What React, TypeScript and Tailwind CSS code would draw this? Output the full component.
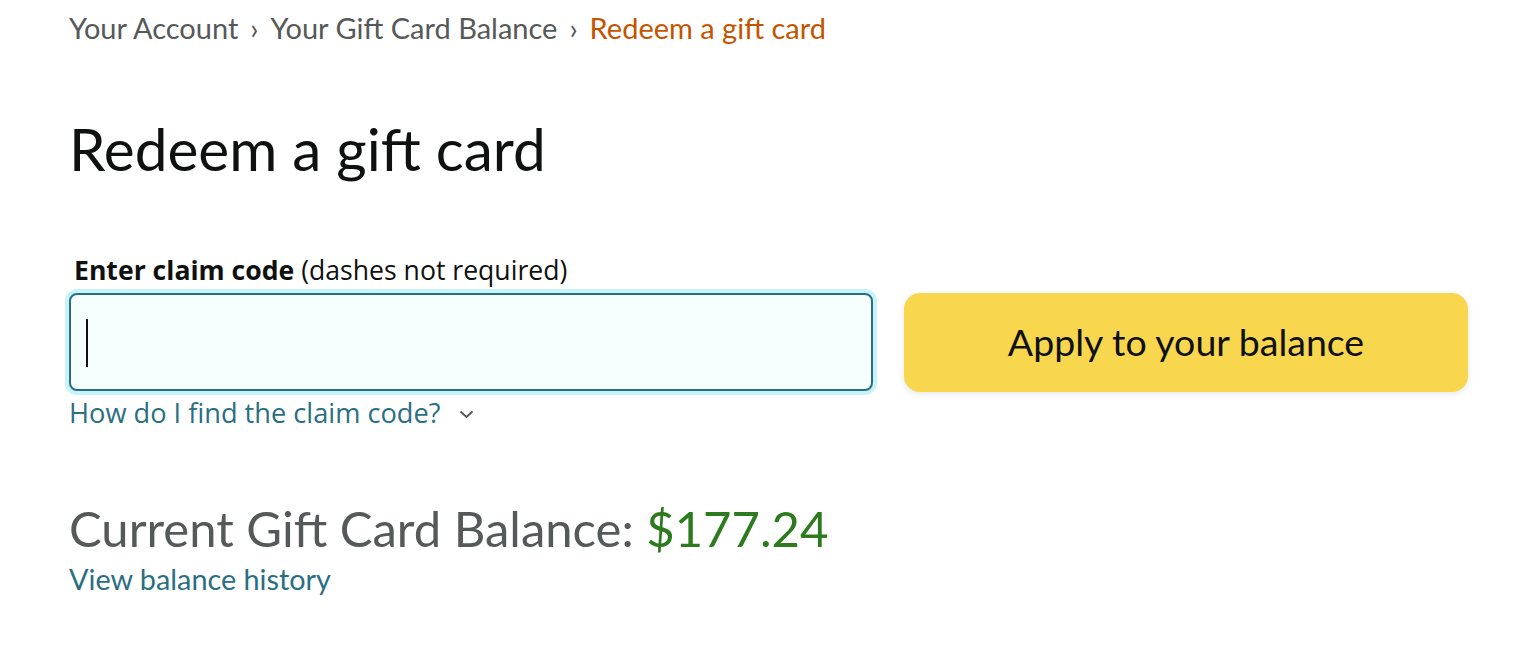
import React from "react";

const ember = { fontFamily: "Lato, 'Noto Sans', sans-serif" };
const open = { fontFamily: "'Open Sans', 'Noto Sans', sans-serif" };

export default function App() {
  return (
    <div className="min-h-[664px] w-[1534px] bg-white pl-[69px] text-[#0f1111]">
      <div className="flex h-[56px] items-center text-[29px] text-[#565959]" style={ember}>
        <span>Your Account</span>
        <span className="mx-[12px]">›</span>
        <span>Your Gift Card Balance</span>
        <span className="mx-[12px]">›</span>
        <span className="text-[#c45500]">Redeem a gift card</span>
      </div>
      <h1 className="mt-[56px] text-[58.5px] leading-[72px] text-[#0f1111]" style={ember}>
        Redeem a gift card
      </h1>
      <div className="mt-[70px] pl-[5px] text-[26.6px] leading-[32px]" style={open}>
        <span className="font-bold">Enter claim code</span> (dashes not required)
      </div>
      <div className="mt-[7px] flex items-start">
        <div className="relative h-[98px] w-[804px] rounded-[8px] border-2 border-[#2a6f80] bg-[#f7feff] shadow-[0_0_0_4px_#c8f3fa]">
          <div className="absolute left-[15px] top-[24px] h-[48px] w-[2px] bg-[#0f1111]" />
        </div>
        <button
          className="ml-[31px] flex h-[99px] w-[564px] items-center justify-center rounded-[16px] bg-[#f8d64e] text-[37.5px] text-[#0f1111] shadow-[0_2px_6px_rgba(213,217,217,0.6)]"
          style={ember}
          type="button"
        >
          Apply to your balance
        </button>
      </div>
      <div className="mt-[5px] flex items-center text-[27.2px] leading-[32px] text-[#2a6f82]" style={open}>
        <span>How do I find the claim code?</span>
        <svg className="ml-[19px] mt-[2px]" width="15" height="9" viewBox="0 0 15 9" fill="none">
          <path d="M1.5 1.5 L7.5 7 L13.5 1.5" stroke="#565959" strokeWidth="2" />
        </svg>
      </div>
      <div className="mt-[67px] text-[49px] leading-[64px] text-[#565959]" style={ember}>
        Current Gift Card Balance: <span className="text-[#2e7b1f]">$177.24</span>
      </div>
      <div className="mt-[3px] text-[28.8px] leading-[32px] text-[#2a6f82]" style={ember}>
        View balance history
      </div>
    </div>
  );
}
